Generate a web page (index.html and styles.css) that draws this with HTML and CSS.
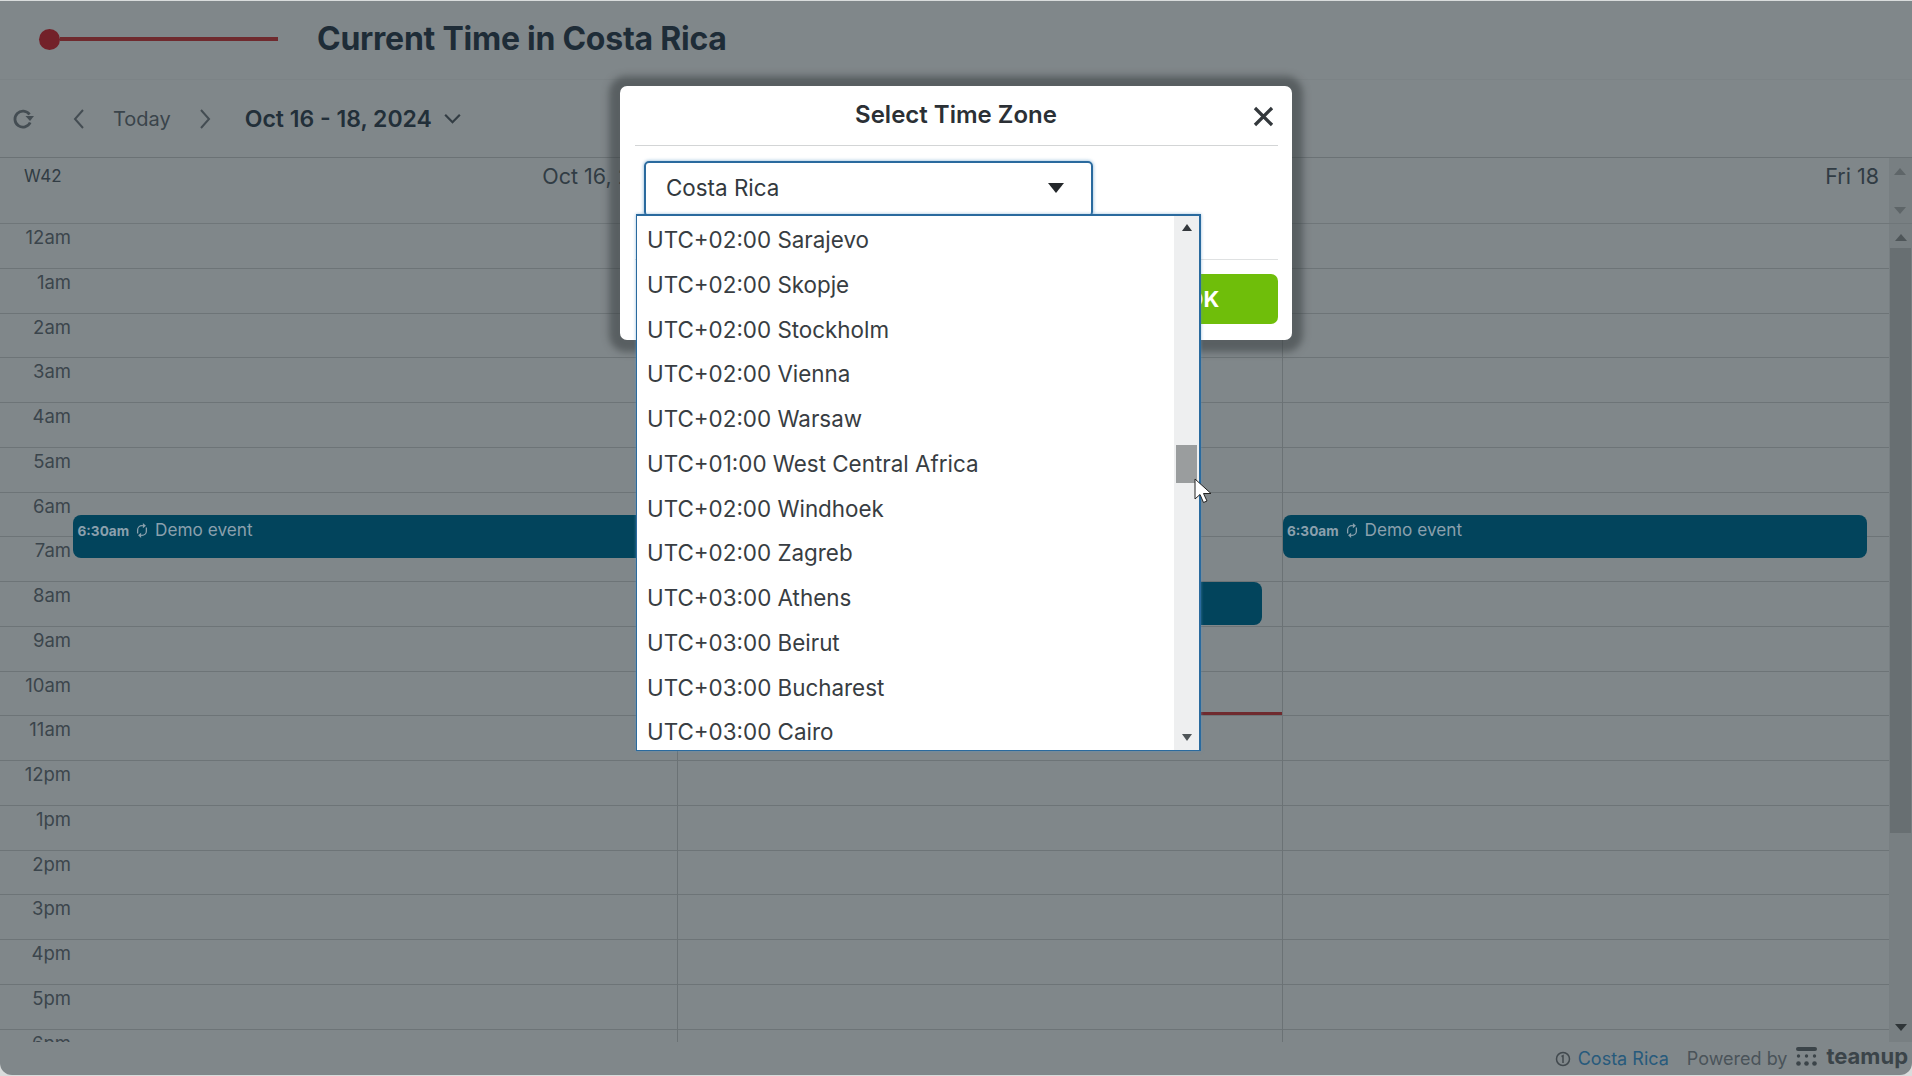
FILE: index.html
```html
<!DOCTYPE html>
<html lang="en">
<head>
<meta charset="utf-8">
<title>Current Time in Costa Rica</title>
<link rel="stylesheet" href="styles.css">
</head>
<body>
<div class="app">
  <header class="topbar">
    <div class="slider"><span class="knob"></span><span class="track"></span></div>
    <h1 class="title">Current Time in Costa Rica</h1>
  </header>
  <nav class="toolbar">
    <svg class="ico refresh" viewBox="0 0 22 22"><path d="M18.200 14.500A8 8 0 1 1 17.500 6.500"/><path class="fill" d="M13.500 8h8.500l-4 5z"/></svg>
    <svg class="ico prev" viewBox="0 0 14 24"><path d="M11 3 3 12l8 9"/></svg>
    <span class="today">Today</span>
    <svg class="ico next" viewBox="0 0 14 24"><path d="m3 3 8 9-8 9"/></svg>
    <span class="range">Oct 16 - 18, 2024</span>
    <svg class="ico caret" viewBox="0 0 20 12"><path d="m2 2 8 8 8-8"/></svg>
  </nav>
  <section class="cal">
    <div class="cal-head">
      <div class="head-cols">
        <div class="week">W42</div>
        <div class="day day-first">Oct 16, 2024</div>
        <div class="day">Thu 17</div>
        <div class="day">Fri 18</div>
      </div>
      <div class="vscroll head-scroll"><i class="up"></i><i class="down"></i></div>
    </div>
    <div class="cal-body">
      <div class="grid">
        <div class="hour">12am</div><div class="hour">1am</div><div class="hour">2am</div><div class="hour">3am</div>
        <div class="hour">4am</div><div class="hour">5am</div><div class="hour">6am</div><div class="hour">7am</div>
        <div class="hour">8am</div><div class="hour">9am</div><div class="hour">10am</div><div class="hour">11am</div>
        <div class="hour">12pm</div><div class="hour">1pm</div><div class="hour">2pm</div><div class="hour">3pm</div>
        <div class="hour">4pm</div><div class="hour">5pm</div><div class="hour">6pm</div>
        <div class="columns">
          <div class="col">
            <div class="event ev-morning"><b>6:30am</b>
              <svg class="repeat" viewBox="0 0 16 17"><path d="M3 12V8a5 5 0 0 1 5-5h1M13 5v4a5 5 0 0 1-5 5H7"/><path class="fill" d="m9 0 3.500 3L9 6zM7 11l-3.500 3L7 17z"/></svg>
              <span>Demo event</span></div>
          </div>
          <div class="col">
            <div class="event ev-eight"></div>
            <div class="now"></div>
          </div>
          <div class="col">
            <div class="event ev-morning"><b>6:30am</b>
              <svg class="repeat" viewBox="0 0 16 17"><path d="M3 12V8a5 5 0 0 1 5-5h1M13 5v4a5 5 0 0 1-5 5H7"/><path class="fill" d="m9 0 3.500 3L9 6zM7 11l-3.500 3L7 17z"/></svg>
              <span>Demo event</span></div>
          </div>
        </div>
      </div>
      <div class="vscroll body-scroll"><i class="up"></i><span class="thumb"></span><i class="down"></i></div>
    </div>
  </section>
  <footer class="status">
    <svg class="info" viewBox="0 0 16 16"><circle cx="8" cy="8" r="6.500"/><path d="M6.500 5.500 8 4.800V12"/></svg>
    <a class="tz">Costa Rica</a>
    <span class="powered">Powered by</span>
    <svg class="logo" viewBox="0 0 22 20"><rect x="0" y="0" width="21" height="4" rx="2"/><circle cx="2.500" cy="9" r="1.700"/><circle cx="10.500" cy="9" r="1.700"/><circle cx="18.500" cy="9" r="1.700"/><circle cx="2.500" cy="16.500" r="2.300"/><circle cx="10.500" cy="16.500" r="2.300"/><circle cx="18.500" cy="16.500" r="2.300"/></svg>
    <span class="brand">teamup</span>
  </footer>

  <div class="modal">
    <div class="modal-head">
      <h2 class="modal-title">Select Time Zone</h2>
      <svg class="close" viewBox="0 0 16 16"><path d="m1.500 1.500 13 13m0-13-13 13"/></svg>
    </div>
    <div class="modal-body">
      <div class="select"><span>Costa Rica</span><i class="select-arrow"></i></div>
    </div>
    <div class="modal-foot"><button class="ok">OK</button></div>
    <div class="dropdown">
      <ul class="options">
        <li>UTC+02:00 Sarajevo</li>
        <li>UTC+02:00 Skopje</li>
        <li>UTC+02:00 Stockholm</li>
        <li>UTC+02:00 Vienna</li>
        <li>UTC+02:00 Warsaw</li>
        <li>UTC+01:00 West Central Africa</li>
        <li>UTC+02:00 Windhoek</li>
        <li>UTC+02:00 Zagreb</li>
        <li>UTC+03:00 Athens</li>
        <li>UTC+03:00 Beirut</li>
        <li>UTC+03:00 Bucharest</li>
        <li>UTC+03:00 Cairo</li>
      </ul>
      <div class="list-scroll"><i class="up"></i><span class="list-thumb"></span><i class="down"></i></div>
    </div>
  </div>
  <svg class="cursor" viewBox="0 0 19 27"><path d="M1 1v20l5-4.500 3.500 8 3.500-1.500-3.500-7.500H17z"/></svg>
</div>
</body>
</html>
```

FILE: styles.css
```css
* { box-sizing: border-box; }
html, body { margin: 0; height: 100%; overflow: hidden; }
body { background: #d9dcdc; font-family: Inter, "Liberation Sans", sans-serif; color: #3d464c; }
i { display: block; }
.app {
  position: relative; width: 1912px; height: 1074px; margin-top: 1px;
  background: #80878a; border-radius: 0 0 12px 12px; overflow: hidden;
  display: flex; flex-direction: column;
}

.topbar { height: 79px; display: flex; align-items: center; padding: 0 0 2px 39px; flex: none; border-bottom: 1px solid #7c8386; }
.slider { display: flex; align-items: center; width: 239px; }
.knob { width: 21px; height: 21px; border-radius: 50%; background: #732129; flex: none; }
.track { height: 4px; width: 218px; background: #6f2a2e; }
.title { margin: 0 0 0 39px; font-size: 32px; line-height: 40px; font-weight: 700; color: #1e2c37; letter-spacing: -0.25px; }

.toolbar { height: 77px; flex: none; display: flex; align-items: center; color: #3a444b; position: relative; }
.ico { fill: none; stroke: #444d53; stroke-width: 2; flex: none; }
.ico .fill { fill: #444d53; stroke: none; }
.refresh { width: 22px; height: 22px; margin-left: 12px; stroke-width: 2.800; }
.prev { width: 14px; height: 24px; margin-left: 38px; }
.today { margin-left: 27px; font-size: 20px; }
.next { width: 14px; height: 24px; margin-left: 27px; }
.range { margin-left: 33px; font-size: 23px; font-weight: 600; color: #222f39; }
.caret { width: 19px; height: 11px; margin-left: 11px; stroke-width: 2.400; stroke: #333d44; }

.cal { flex: none; height: 885px; border-top: 1px solid #6b7275; display: flex; flex-direction: column; }
.cal-head { height: 66px; flex: none; display: flex; border-bottom: 1px solid #6f7679; }
.head-cols { flex: 1; display: grid; grid-template-columns: 73px 604px 604.5px 1fr; padding-top: 5px; font-size: 21.500px; color: #313c44; }
.week { padding-left: 24px; font-size: 17px; line-height: 27px; }
.day { text-align: right; line-height: 27px; padding-right: 10px; }
.day-first { padding-right: 6px; }
.vscroll { width: 23px; flex: none; background: #787f82; display: flex; flex-direction: column; align-items: center; }
.up, .down { width: 0; height: 0; border-left: 6px solid transparent; border-right: 6px solid transparent; }
.up { border-bottom: 7px solid #4f5659; }
.down { border-top: 7px solid #2f3538; }
.head-scroll { padding-top: 10px; gap: 32px; padding-right: 2px; }
.head-scroll .up { border-bottom-color: #5e6568; }
.head-scroll .down { border-top-color: #5e6568; }
.body-scroll { padding-top: 10px; }
.thumb { width: 21px; height: 585px; background: #686f72; margin-top: 7px; }
.body-scroll .down { margin-top: 191px; }

.cal-body { flex: 1; min-height: 0; display: flex; }
.grid { flex: 1; position: relative; overflow: hidden; }
.hour {
  height: 44.75px; border-bottom: 1px solid #6d7477; width: 100%;
  padding: 0 calc(100% - 71px) 0 0; text-align: right; white-space: nowrap;
  font-size: 18.500px; line-height: 26px; color: #3b454c;
}
.columns { position: absolute; inset: 0 0 0 73px; display: grid; grid-template-columns: 604px 604.5px 1fr; }
.col { position: relative; }
.col + .col { border-left: 1px solid #6b7275; }
.event {
  position: absolute; left: 0; width: 584px; height: 43px; background: #02445c; border-radius: 8px;
  display: flex; align-items: flex-start; padding: 3px 0 0 4.5px; color: #8ba0ad; font-size: 17.200px; line-height: 24px; white-space: nowrap;
}
.event b { font-size: 13.600px; font-weight: 700; line-height: 27px; }
.ev-morning { top: 291px; }
.ev-eight { top: 358px; left: 0; }
.repeat { width: 14px; height: 17px; margin: 4px 6px 0 6px; fill: none; stroke: #8ba0ad; stroke-width: 1.500; flex: none; }
.repeat .fill { fill: #8ba0ad; stroke: none; }
.now { position: absolute; left: 0; right: 0; top: 488px; height: 3px; background: #6f2a2e; }

.status { flex: 1; display: flex; align-items: center; justify-content: flex-end; padding: 0 4px 0 0; font-size: 18px; color: #4a5359; }
.info { width: 16px; height: 16px; fill: none; stroke: #41494e; stroke-width: 1.500; margin-right: 7px; }
.tz { color: #275a7c; margin-right: 18px; }
.powered { margin-right: 9px; }
.logo { width: 22px; height: 20px; fill: #3b4449; margin-right: 8px; margin-top: -4px; }
.brand { font-size: 22px; font-weight: 700; color: #3b4449; margin-top: -6px; }

.modal {
  position: absolute; left: 620px; top: 85px; width: 672px; height: 254px;
  background: #fff; border-radius: 7px; box-shadow: 0 1px 7px 11px rgba(50,55,58,.5);
  display: flex; flex-direction: column; padding: 0 14px 0 15px;
}
.modal-head { height: 60px; flex: none; position: relative; border-bottom: 1px solid #d3d5d6; display: flex; justify-content: center; align-items: center; padding: 0 1px 3px 0; }
.modal-title { margin: 0; font-size: 24px; font-weight: 600; color: #2b3035; }
.close { position: absolute; right: 4px; top: 20px; width: 21px; height: 21px; stroke: #33383c; stroke-width: 2.500; fill: none; }
.modal-body { height: 114px; flex: none; padding: 15px 0 0 9px; border-bottom: 1px solid #dfe1e2; }
.select {
  width: 449px; height: 56px; border: 2px solid #2a6a9e; border-radius: 5px; padding: 0 27px 3px 20px;
  display: flex; align-items: center; justify-content: space-between;
  font-size: 22.400px; color: #33393e; box-shadow: 0 0 3px 1px rgba(90,150,200,.45);
}
.select-arrow { width: 0; height: 0; border-left: 8px solid transparent; border-right: 8px solid transparent; border-top: 10px solid #24282b; }
.modal-foot { flex: 1; display: flex; justify-content: flex-end; align-items: flex-start; padding-top: 14px; }
.ok {
  width: 150px; height: 50px; border: 0; border-radius: 7px; background: #6fbe0a; color: #fff;
  font: 700 22px Inter, "Liberation Sans", sans-serif;
}
.dropdown {
  position: absolute; left: 16px; top: 128px; width: 565px; height: 537px; background: #fff;
  border: 1px solid #2a6a9e; border-top-width: 2px; border-right-width: 2px; display: flex; overflow: hidden;
  box-shadow: 0 0 3px rgba(90,150,200,.6); 
}
.options { flex: 1; margin: 0; padding: 2px 0 0; list-style: none; overflow: hidden; font-size: 22.400px; color: #383d42; }
.options li { height: 44.75px; line-height: 44.75px; padding-left: 10px; white-space: nowrap; }
.list-scroll { width: 25px; flex: none; background: #eeeff0; display: flex; flex-direction: column; align-items: center; padding-top: 8px; }
.list-scroll .up, .list-scroll .down { border-left-width: 5.500px; border-right-width: 5.500px; }
.list-scroll .up { border-bottom-color: #33383c; }
.list-scroll .down { border-top-color: #4f5558; margin-top: 251px; }
.list-thumb { width: 21px; height: 38px; background: #9a9d9e; margin-top: 214px; margin-left: 0; }
.cursor { position: absolute; left: 1194px; top: 477px; width: 19px; height: 27px; fill: #fff; stroke: #222; stroke-width: 1; }
```
